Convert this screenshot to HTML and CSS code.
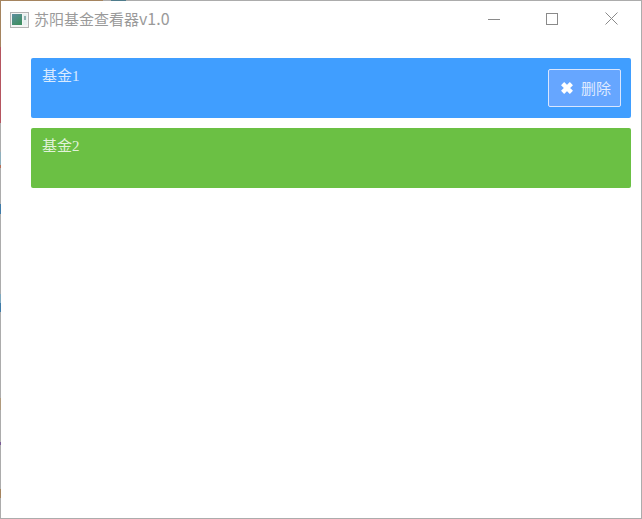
FILE: index.html
```html
<!DOCTYPE html>
<html lang="zh">
<head>
<meta charset="utf-8">
<title>苏阳基金查看器v1.0</title>
<link rel="stylesheet" href="styles.css">
</head>
<body>
<div class="window">
  <header class="titlebar">
    <svg class="app-icon" width="20" height="16" viewBox="0 0 20 16">
      <defs>
        <linearGradient id="screen" x1="0" y1="0" x2="0.6" y2="1">
          <stop offset="0" stop-color="#5d8ea0"/>
          <stop offset="1" stop-color="#3f8f62"/>
        </linearGradient>
      </defs>
      <rect x="0.5" y="0.5" width="18" height="15" fill="#f4f4f4" stroke="#b4b4b4"/>
      <rect x="2" y="2" width="10" height="11" fill="url(#screen)"/>
      <rect x="13" y="2" width="4" height="11" fill="#e6f0f0"/>
      <rect x="14" y="4" width="2" height="4" fill="#8fb0b0"/>
    </svg>
    <span class="title">苏阳基金查看器<span class="version">v1.0</span></span>
    <div class="controls">
      <svg class="ctl ctl-min" width="12" height="12" viewBox="0 0 12 12"><path d="M0 6.5H12" stroke="#8a8a8a" fill="none"/></svg>
      <svg class="ctl" width="12" height="12" viewBox="0 0 12 12"><rect x="0.5" y="0.5" width="11" height="11" stroke="#8a8a8a" fill="none"/></svg>
      <svg class="ctl" width="13" height="13" viewBox="0 0 13 13"><path d="M0.5 0.5L12.5 12.5M12.5 0.5L0.5 12.5" stroke="#8a8a8a" fill="none"/></svg>
    </div>
  </header>
  <main class="list">
    <section class="card card-blue">
      <span class="name">基金1</span>
      <button class="del" type="button">
        <svg width="14" height="14" viewBox="0 0 14 14"><path d="M2.6 2.6L11.4 11.4M11.4 2.6L2.6 11.4" stroke="#fff" stroke-width="4.4" fill="none"/></svg>
        <span>删除</span>
      </button>
    </section>
    <section class="card card-green">
      <span class="name">基金2</span>
    </section>
  </main>
</div>
</body>
</html>
```
FILE: styles.css
```css
* { box-sizing: border-box; }
html, body { margin: 0; height: 100%; }
body { background: #fff; overflow: hidden; }
.window {
  height: 519px;
  padding: 1px;
  display: flex;
  flex-direction: column;
  background-color: #fff;
  background-repeat: no-repeat;
  background-position: 0 0, 0 0, 100% 0, 0 100%;
  background-size: 100% 1px, 1px 100%, 1px 100%, 100% 1px;
  background-image:
    linear-gradient(to right, #a5845f 0 103px, #acacac 103px 111px, #4f7c8c 111px 126px, #acacac 126px 100%),
    linear-gradient(to bottom,
      #a5845f 0 47px, #b55560 47px 123px, #acacac 123px 152px, #8fb0bd 152px 165px,
      #b5705a 165px 168px, #acacac 168px 204px, #3f7ba8 204px 214px, #acacac 214px 294px,
      #7fa9bf 294px 303px, #3f7ba8 303px 312px, #acacac 312px 398px, #b09a7c 398px 410px,
      #acacac 410px 442px, #7a5a96 442px 445px, #acacac 445px 489px, #a5845f 489px 498px,
      #acacac 498px 100%),
    linear-gradient(#acacac, #acacac),
    linear-gradient(#acacac, #acacac);
}
.titlebar {
  height: 37px;
  flex: none;
  display: flex;
  align-items: center;
  padding: 0 0 0 9px;
}
.app-icon { flex: none; margin-right: 4px; }
.title {
  font: 15px/20px "Noto Sans CJK SC", "Liberation Sans", sans-serif;
  color: #9a9a9a;
  position: relative;
  top: -1px;
}
.version { font-size: 16px; }
.controls {
  margin-left: auto;
  display: flex;
  align-items: center;
  gap: 47px;
  padding-right: 23px;
  position: relative;
  top: -1px;
}
.ctl { display: block; }
.ctl-min { margin-right: -1px; }
.list {
  display: flex;
  flex-direction: column;
  gap: 10px;
  padding: 20px 10px 0 30px;
}
.card {
  height: 60px;
  border-radius: 2px;
  padding: 9px 10px 0 11px;
  display: flex;
  justify-content: space-between;
  align-items: flex-start;
  color: #fff;
}
.card-blue { background: #409eff; }
.card-green { background: #6bc044; }
.name {
  font: 15px/18px "Liberation Serif", "Noto Sans CJK SC", serif;
  opacity: 0.8;
}
.del {
  width: 73px;
  height: 38px;
  margin-top: 2px;
  display: flex;
  align-items: center;
  padding: 0 0 0 11px;
  gap: 7px;
  border: 1px solid #d9e6ff;
  border-radius: 2px;
  background: #66a6ff;
  color: #dfeaff;
  font: 15px/18px "Noto Sans CJK SC", sans-serif;
}
.del svg { display: block; }
```
